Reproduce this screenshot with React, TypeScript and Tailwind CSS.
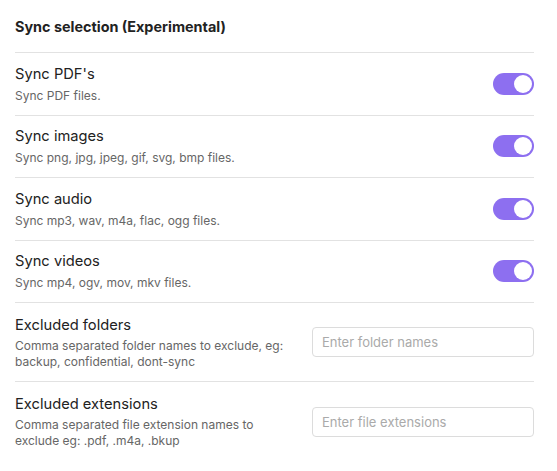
import React, { useState } from "react";

const toggles = [
  { name: "Sync PDF's", desc: "Sync PDF files." },
  { name: "Sync images", desc: "Sync png, jpg, jpeg, gif, svg, bmp files." },
  { name: "Sync audio", desc: "Sync mp3, wav, m4a, flac, ogg files." },
  { name: "Sync videos", desc: "Sync mp4, ogv, mov, mkv files." },
];

function Toggle({ on, onClick }: { on: boolean; onClick: () => void }) {
  return (
    <button
      onClick={onClick}
      className={`w-[41px] h-[22px] rounded-full flex items-center px-[2px] shrink-0 ${on ? "bg-[#8d6ff0] justify-end" : "bg-[#d4d4d4] justify-start"}`}
    >
      <span className="w-[18px] h-[18px] rounded-full bg-white block" />
    </button>
  );
}

export default function App() {
  const [state, setState] = useState([true, true, true, true]);

  return (
    <div className="w-[557px] h-[471px] bg-white pl-[15px] pr-[23px] font-['Inter',sans-serif] text-[#222]">
      <div className="h-[53px] flex items-center border-b border-[#e2e2e2] pt-[2px]">
        <h2 className="text-[14.4px] font-bold">Sync selection (Experimental)</h2>
      </div>

      {toggles.map((t, i) => (
        <div key={t.name} className="h-[62.5px] flex items-center border-b border-[#e2e2e2] gap-4">
          <div className="flex-1 min-w-0">
            <div className="text-[14.7px] leading-[20px]">{t.name}</div>
            <div className="text-[12px] leading-[16px] text-[#666] mt-[4px]">{t.desc}</div>
          </div>
          <Toggle on={state[i]} onClick={() => setState(s => s.map((v, j) => (j === i ? !v : v)))} />
        </div>
      ))}

      <div className="h-[79px] flex items-center border-b border-[#e2e2e2] gap-4">
        <div className="w-[290px]">
          <div className="text-[14.7px] leading-[20px]">Excluded folders</div>
          <div className="text-[12px] leading-[16px] text-[#666] mt-[3px]">Comma separated folder names to exclude, eg: backup, confidential, dont-sync</div>
        </div>
        <input
          placeholder="Enter folder names"
          className="ml-auto w-[223px] h-[30px] border border-[#dcdcdc] rounded-[4px] px-[9px] text-[13px] placeholder:text-[#aaa] outline-none"
        />
      </div>

      <div className="h-[79px] flex items-center gap-4">
        <div className="w-[290px]">
          <div className="text-[14.7px] leading-[20px]">Excluded extensions</div>
          <div className="text-[12px] leading-[16px] text-[#666] mt-[3px]">Comma separated file extension names to exclude eg: .pdf, .m4a, .bkup</div>
        </div>
        <input
          placeholder="Enter file extensions"
          className="ml-auto w-[223px] h-[30px] border border-[#dcdcdc] rounded-[4px] px-[9px] text-[13px] placeholder:text-[#aaa] outline-none"
        />
      </div>
    </div>
  );
}
